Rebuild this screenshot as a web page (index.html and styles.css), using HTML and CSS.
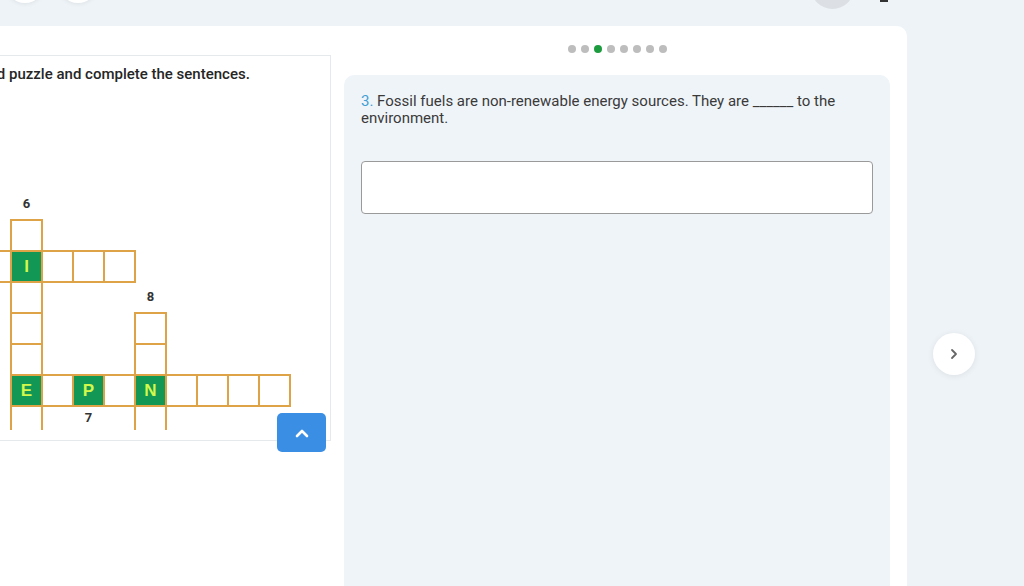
FILE: index.html
```html
<!DOCTYPE html>
<html lang="en">
<head>
  <meta charset="UTF-8">
  <meta name="viewport" content="width=device-width, initial-scale=1.0">
  <title>Crossword Exercise</title>
  <link rel="stylesheet" href="styles.css">
</head>
<body>
  <div class="topbar">
    <span class="tb-circle first"></span>
    <span class="tb-circle"></span>
    <span class="avatar"></span>
    <span class="tb-mark"></span>
  </div>

  <div class="main">
    <div class="card">
      <section class="reading">
        <p class="instr">Do the crossword puzzle and complete the sentences.</p>

        <div class="crossword">
          <span class="num c1 r0">6</span>
          <span class="cell c1 r1"></span>

          <span class="cell c0 r2"></span>
          <span class="cell fill c1 r2">I</span>
          <span class="cell c2 r2"></span>
          <span class="cell c3 r2"></span>
          <span class="cell c4 r2"></span>

          <span class="cell c1 r3"></span>
          <span class="num c5 r3">8</span>
          <span class="cell c1 r4"></span>
          <span class="cell c5 r4"></span>
          <span class="cell c1 r5"></span>
          <span class="cell c5 r5"></span>

          <span class="cell fill c1 r6">E</span>
          <span class="cell c2 r6"></span>
          <span class="cell fill c3 r6">P</span>
          <span class="cell c4 r6"></span>
          <span class="cell fill c5 r6">N</span>
          <span class="cell c6 r6"></span>
          <span class="cell c7 r6"></span>
          <span class="cell c8 r6"></span>
          <span class="cell c9 r6"></span>

          <span class="stub c1 r7"></span>
          <span class="num c3 r7">7</span>
          <span class="stub c5 r7"></span>
        </div>

        <button class="to-top" type="button" aria-label="Back to top">
          <svg width="14" height="10" viewBox="0 0 14 10"><path d="M2 8 L7 3 L12 8" fill="none" stroke="#fff" stroke-width="2.6" stroke-linecap="round" stroke-linejoin="round"/></svg>
        </button>
      </section>

      <section class="question-col">
        <div class="dots">
          <span class="dot"></span>
          <span class="dot"></span>
          <span class="dot active"></span>
          <span class="dot"></span>
          <span class="dot"></span>
          <span class="dot"></span>
          <span class="dot"></span>
          <span class="dot"></span>
        </div>

        <div class="question">
          <p class="q-text"><span class="q-num">3.</span> Fossil fuels are non-renewable energy sources. They are ______ to the environment.</p>
          <input class="answer" type="text">
        </div>
      </section>
    </div>

    <div class="side">
      <button class="next" type="button" aria-label="Next">
        <svg width="10" height="12" viewBox="0 0 10 12"><path d="M3 2 L7 6 L3 10" fill="none" stroke="#666" stroke-width="1.8" stroke-linecap="round" stroke-linejoin="round"/></svg>
      </button>
    </div>
  </div>
</body>
</html>
```

FILE: styles.css
```css
body {
  margin: 0;
  padding: 0;
  background-color: #eef3f8;
  font-family: Roboto, "Liberation Sans", Arial, sans-serif;
  color: #333;
  overflow: hidden;
}

/* top bar, mostly scrolled out of view */
.topbar {
  display: flex;
  align-items: flex-start;
  height: 26px;
}

.tb-circle {
  width: 40px;
  height: 40px;
  margin-top: -37px;
  margin-left: 13px;
  border-radius: 50%;
  background: #fff;
  box-shadow: 0 1px 4px rgba(0, 0, 0, 0.07);
}

.tb-circle.first {
  margin-left: 5px;
}

.avatar {
  width: 43px;
  height: 43px;
  margin-top: -34px;
  margin-left: 713px;
  border-radius: 50%;
  background: #dcdfe3;
}

.tb-mark {
  width: 8px;
  height: 2px;
  margin-left: 26px;
  background: #333;
}

.main {
  display: flex;
  height: 560px;
}

.card {
  display: flex;
  gap: 14px;
  width: 907px;
  padding: 19px 17px 0 0;
  box-sizing: border-box;
  background: #fff;
  border-top-right-radius: 10px;
}

/* left panel with the puzzle */
.reading {
  position: relative;
  flex: none;
  width: 459px;
  height: 386px;
  margin: 10px -1px 0 -128px;
  padding: 8px 15px;
  box-sizing: border-box;
  border: 1px solid #e6e9ec;
}

.instr {
  margin: 0;
  font-size: 15px;
  font-weight: 500;
  line-height: 20px;
  color: #262626;
}

.crossword {
  display: grid;
  grid-template-columns: repeat(10, 31px);
  grid-template-rows: repeat(7, 31px) 25px;
  margin: 104px 0 0 91px;
}

.cell,
.stub {
  width: 33px;
  height: 33px;
  box-sizing: border-box;
  border: 2px solid #dea247;
}

.stub {
  height: 25px;
  border-top: none;
  border-bottom: none;
}

.cell.fill {
  display: flex;
  align-items: center;
  justify-content: center;
  background: #129755;
  color: #d3f74a;
  font-family: "Liberation Sans", Arial, sans-serif;
  font-size: 17px;
  font-weight: bold;
}

.num {
  display: flex;
  align-items: center;
  justify-content: center;
  width: 33px;
  font-size: 13px;
  font-weight: bold;
  color: #333;
}

.c0 { grid-column: 1; }
.c1 { grid-column: 2; }
.c2 { grid-column: 3; }
.c3 { grid-column: 4; }
.c4 { grid-column: 5; }
.c5 { grid-column: 6; }
.c6 { grid-column: 7; }
.c7 { grid-column: 8; }
.c8 { grid-column: 9; }
.c9 { grid-column: 10; }

.r0 { grid-row: 1; }
.r1 { grid-row: 2; }
.r2 { grid-row: 3; }
.r3 { grid-row: 4; }
.r4 { grid-row: 5; }
.r5 { grid-row: 6; }
.r6 { grid-row: 7; }
.r7 { grid-row: 8; }

.to-top {
  position: absolute;
  left: 404px;
  top: 357px;
  display: flex;
  align-items: center;
  justify-content: center;
  width: 49px;
  height: 39px;
  padding: 0;
  border: none;
  border-radius: 5px;
  background: #3a8ee4;
  cursor: pointer;
}

/* right side: question */
.question-col {
  display: flex;
  flex-direction: column;
  flex: 1;
}

.dots {
  display: flex;
  justify-content: center;
  gap: 5px;
  height: 8px;
}

.dot {
  width: 8px;
  height: 8px;
  border-radius: 50%;
  background: #bdbdbd;
}

.dot.active {
  background: #1d9c3f;
}

.question {
  flex: 1;
  margin-top: 22px;
  padding: 18px 17px;
  border-radius: 10px 10px 0 0;
  background: #eff4f9;
}

.q-text {
  margin: 0;
  font-size: 15px;
  line-height: 17px;
  color: #3a3a3a;
}

.q-num {
  color: #3fa0d4;
}

.answer {
  display: block;
  width: 100%;
  height: 53px;
  margin-top: 34px;
  box-sizing: border-box;
  border: 1px solid #9a9a9a;
  border-radius: 4px;
  background: #fff;
}

.side {
  flex: 1;
}

.next {
  display: flex;
  align-items: center;
  justify-content: center;
  width: 42px;
  height: 42px;
  margin: 307px 0 0 26px;
  padding: 0;
  border: none;
  border-radius: 50%;
  background: #fff;
  box-shadow: 0 1px 6px rgba(0, 0, 0, 0.08);
  cursor: pointer;
}
```
